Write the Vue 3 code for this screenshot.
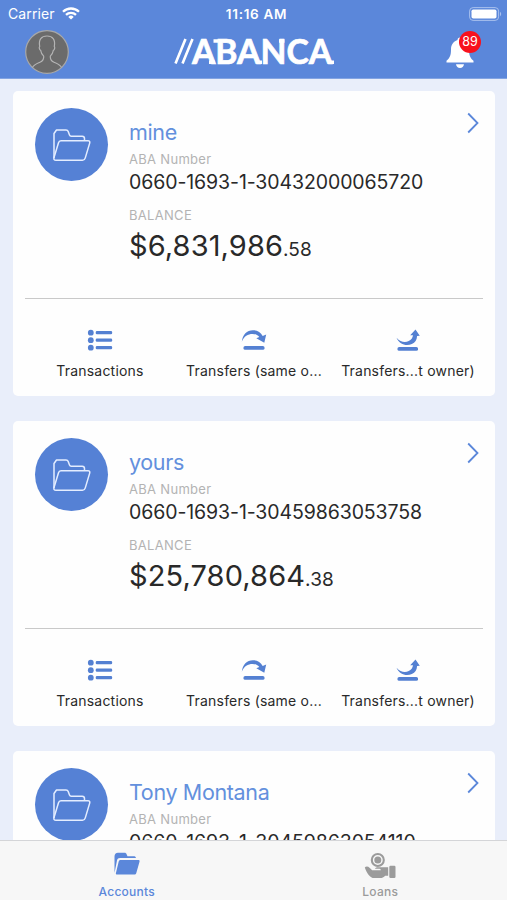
<script setup>
import { ref } from 'vue';

const activeTab = ref('accounts');
const notifications = ref(89);

const accounts = ref([
    { name: 'mine', number: '0660-1693-1-30432000065720', whole: '$6,831,986', cents: '.58' },
    { name: 'yours', number: '0660-1693-1-30459863053758', whole: '$25,780,864', cents: '.38' },
    { name: 'Tony Montana', number: '0660-1693-1-30459863054110' },
]);
</script>

<template>
    <div class="app">
        <header class="header">
            <div class="status">
                <div class="status__carrier">
                    Carrier
                    <svg class="wifi" width="18" height="13" viewBox="0 0 18 13" fill="none" stroke="#fff" stroke-width="2.3">
                        <path d="M1 4.8C5.5.4 12.5.4 17 4.8" />
                        <path d="M4 7.9c2.8-2.7 7.2-2.7 10 0" />
                        <path d="M9 12.6 6.3 9.900a3.900 3.900 0 0 1 5.400 0z" fill="#fff" stroke="none" />
                    </svg>
                </div>
                <div class="status__time">11:16 AM</div>
                <svg class="battery" width="33" height="14" viewBox="0 0 33 14">
                    <rect x=".6" y=".6" width="29" height="12.8" rx="3.5" fill="none" stroke="#a9c1ee" stroke-width="1" />
                    <rect x="2.5" y="2.5" width="25" height="9" rx="1.8" fill="#fff" />
                    <path d="M31 4.8c1.6.8 1.6 3.6 0 4.4z" fill="#a9c1ee" />
                </svg>
            </div>
            <div class="navbar">
                <svg class="avatar" width="44" height="44" viewBox="0 0 44 44">
                    <circle cx="22" cy="22" r="21.3" fill="#6b6b6b" stroke="#a8a8a8" stroke-width="1.2" />
                    <path d="M7.5 37.5c1.200-3 4-3.800 7.500-5.300 3-1.300 4-2.700 3.700-6-1.800-1.800-2.700-3.400-3-5.700-1.500-.8-1.800-3.200-1-4.200C13.400 9.500 16.500 6 22 6s8.600 3.500 7.300 10.300c.8 1 .5 3.400-1 4.200-.3 2.300-1.200 3.900-3 5.700-.3 3.300.7 4.700 3.700 6 3.500 1.500 6.300 2.300 7.500 5.300" fill="none" stroke="#b4b4b4" stroke-width="1.2" />
                </svg>
                <svg class="logo" width="162" height="34" viewBox="0 0 162 34">
                    <path d="M2.500 28.500 12.500 4M9.500 28.500 19.500 4" fill="none" stroke="#fff" stroke-width="2.600" />
                    <text x="19" y="29" textLength="140" lengthAdjust="spacingAndGlyphs">ABANCA</text>
                    <path d="M40.500 6h5M36 27.300h6M84 27.300h5M106 6h5.500M155 27.300h6" fill="none" stroke="#fff" stroke-width="3.400" />
                </svg>
                <div class="bell">
                    <svg width="28" height="33" viewBox="0 0 28 33" fill="#fff">
                        <path d="M14 1.500c-1.600 0-2.500 1-2.500 2.500C7 5.500 5 9 5 13.500c0 6-1.200 8.500-4.500 11.300V26.500h27v-1.700C24.200 22 23 19.500 23 13.500 23 9 21 5.500 16.500 4c0-1.500-.9-2.500-2.500-2.500z" />
                        <path d="M10 28.300h8c-.3 2.300-1.800 3.700-4 3.700s-3.700-1.400-4-3.700z" />
                    </svg>
                    <span class="bell__badge">{{ notifications }}</span>
                </div>
            </div>
        </header>

        <main class="list">
            <article v-for="account in accounts" :key="account.number" class="card">
                <div class="card__top">
                    <div class="card__icon">
                        <svg width="40" height="34" viewBox="0 0 40 34" fill="none" stroke="#e4edff" stroke-width="1.5" stroke-linejoin="round">
                            <path d="M2 30V5.500L4.500 2H14c1.200 0 1.800.4 2.200 1.500L17.500 7c.3.800.8 1.200 1.700 1.200h11c1.500 0 2.300.8 2.300 2.300v2" />
                            <path d="M9 12.800h27c1.600 0 2.100.9 1.700 2.300l-4.500 15c-.5 1.600-1.200 2.200-2.700 2.200H4c-1.800 0-2.500-1-2-2.700L6.500 14.800c.4-1.400 1.200-2 2.500-2z" />
                        </svg>
                    </div>
                    <div class="card__info">
                        <div class="card__name">{{ account.name }}</div>
                        <div class="card__label">ABA Number</div>
                        <div class="card__number">{{ account.number }}</div>
                        <template v-if="account.whole">
                            <div class="card__label card__label--balance">BALANCE</div>
                            <div class="card__amount">{{ account.whole }}<span class="card__cents">{{ account.cents }}</span></div>
                        </template>
                    </div>
                    <svg class="card__chevron" width="12" height="22" viewBox="0 0 12 22" fill="none" stroke="#5b87da" stroke-width="1.8">
                        <path d="M1.200 1.500 10.500 11 1.200 20.500" />
                    </svg>
                </div>
                <div v-if="account.whole" class="card__actions">
                    <div class="action">
                        <svg width="26" height="24" viewBox="0 0 26 24" fill="#5480d2">
                            <circle cx="3.800" cy="4.700" r="2.900" />
                            <circle cx="3.800" cy="12.200" r="2.900" />
                            <circle cx="3.800" cy="19.700" r="2.900" />
                            <rect x="8.700" y="3.100" width="16.500" height="3.200" rx="1.300" />
                            <rect x="8.700" y="10.600" width="16.500" height="3.200" rx="1.300" />
                            <rect x="8.700" y="18.100" width="16.500" height="3.200" rx="1.300" />
                        </svg>
                        <span class="action__label">Transactions</span>
                    </div>
                    <div class="action">
                        <svg width="26" height="24" viewBox="0 0 26 24" fill="#5480d2">
                            <path d="M.8 13.800C1.500 6.500 6 2.200 11.800 2.200c4.500 0 7.900 2 9.900 5.700l3.500-1.300-1.900 8.200-8-4.600 3-1.100C16.600 7 14.500 6 11.500 6 7 6 3 8.200.8 13.800z" />
                            <rect x="2.500" y="18" width="21" height="3.800" rx="1.600" />
                        </svg>
                        <span class="action__label">Transfers (same o...</span>
                    </div>
                    <div class="action">
                        <svg width="26" height="24" viewBox="0 0 26 24" fill="#5480d2">
                            <path d="M1.500 9.700c4 4.400 8.500 5 12.200 3.300 2.500-1.200 4-3 4.300-5.700h-2.800L20.500 1.600l4.300 6.200-2.700.1c-.2 4-2 6.700-5.200 8.100C11 18.500 4.500 16.300 1.500 9.700z" />
                            <rect x="2.500" y="18.900" width="20.500" height="3.900" rx="1.600" />
                        </svg>
                        <span class="action__label">Transfers...t owner)</span>
                    </div>
                </div>
            </article>
        </main>

        <nav class="tabs">
            <div class="tab" :class="activeTab === 'accounts' ? 'tab--active' : ''" @click="activeTab = 'accounts'">
                <svg width="32" height="28" viewBox="0 0 32 28" fill="currentColor">
                    <path d="M3.500 22V5.500C3.500 3 4.800 1.700 7 1.700h6.500c1.200 0 1.700.5 2.100 1.500l.9 2h6c1.700 0 2.400.6 2.400 1.800H9c-1.700 0-2.500.7-2.900 2z" />
                    <path d="M9.500 9h17.800c1.200 0 1.500.7 1.200 1.700l-3.200 11.200c-.4 1.200-.9 1.700-2.100 1.700H6.200c-1.300 0-1.600-.7-1.200-1.800l2.700-11.200c.3-1.100.8-1.600 1.800-1.600z" />
                </svg>
                <span class="tab__label">Accounts</span>
            </div>
            <div class="tab" :class="activeTab === 'loans' ? 'tab--active' : ''" @click="activeTab = 'loans'">
                <svg width="32" height="28" viewBox="0 0 32 28" fill="currentColor">
                    <circle cx="13.800" cy="9" r="6" fill="none" stroke="currentColor" stroke-width="2.100" />
                    <circle cx="13.800" cy="9" r="3.500" />
                    <path d="M.8 16.500c1.200-1.500 3.400-1.200 4.700.2l2.700 2.600h8.600c0-1.100-.8-1.500-2-1.500h-4c.5-1.100 1.500-1.600 3-1.600h10.400v8.500h-3c-1.500 1.700-3 2.400-5 2.400h-6C6 27.100 3 22.500.8 16.500z" />
                    <rect x="25.300" y="14.800" width="6.200" height="12.200" rx="1.200" />
                </svg>
                <span class="tab__label">Loans</span>
            </div>
        </nav>
    </div>
</template>

<style>
body {
    margin: 0;
    overflow: hidden;
}
</style>

<style scoped>
.app {
    display: flex;
    flex-direction: column;
    width: 507px;
    height: 900px;
    overflow: hidden;
    background: #e9eefa;
    font-family: Inter, "Liberation Sans", sans-serif;
    color: #292929;
}

.header {
    flex: none;
    height: 79px;
    background: #5b87da;
    color: #fff;
    box-sizing: border-box;
    border-bottom: 1px solid #83a4e2;
}

.status {
    display: grid;
    grid-template-columns: 1fr auto 1fr;
    align-items: center;
    height: 27px;
    padding: 0 5px 0 8px;
    font-size: 14px;
}

.status__carrier {
    display: flex;
    align-items: center;
    gap: 7px;
    letter-spacing: 0.1px;
}

.status__time {
    font-weight: 600;
    font-size: 13.5px;
    letter-spacing: 0.7px;
    padding-left: 3px;
}

.battery {
    justify-self: end;
}

.navbar {
    display: flex;
    justify-content: space-between;
    align-items: center;
    height: 50px;
    padding: 0 25px;
}

.logo {
    overflow: visible;
    margin-right: 7px;
}

.logo text {
    font-family: Lato, sans-serif;
    font-weight: 700;
    font-size: 35px;
    fill: #fff;
    stroke: #fff;
    stroke-width: 0.7px;
}

.bell {
    position: relative;
    width: 36px;
    height: 33px;
}

.bell__badge {
    position: absolute;
    left: 13px;
    top: -5px;
    width: 22px;
    height: 22px;
    border-radius: 50%;
    background: #f8111d;
    font-size: 12.5px;
    line-height: 22px;
    text-align: center;
}

.list {
    flex: 1;
    min-height: 0;
    overflow: hidden;
    display: flex;
    flex-direction: column;
    gap: 25px;
    padding: 12px 12px 0 13px;
}

.card {
    flex: none;
    height: 305px;
    border-radius: 5px;
    background: #fefefe;
}

.card__top {
    display: flex;
    height: 207px;
    margin: 0 12px;
    border-bottom: 1px solid #c9c9c9;
}

.card__icon {
    display: flex;
    justify-content: center;
    align-items: center;
    width: 73px;
    height: 73px;
    margin: 17px 0 0 10px;
    border-radius: 50%;
    background: #5581d5;
}

.card__info {
    flex: 1;
    margin: 28px 0 0 21px;
    white-space: nowrap;
}

.card__name {
    font-size: 21.5px;
    line-height: 26px;
    letter-spacing: -0.35px;
    color: #6390dd;
}

.card__label {
    margin-top: 6px;
    font-size: 13px;
    line-height: 16px;
    color: #b3b3b3;
    letter-spacing: 0.3px;
}

.card__label--balance {
    margin-top: 14px;
}

.card__number {
    margin-top: 4px;
    font-size: 19.5px;
    line-height: 22px;
    letter-spacing: -0.1px;
}

.card__amount {
    margin-top: 6px;
    font-size: 29px;
    line-height: 34px;
    letter-spacing: 0.1px;
}

.card__cents {
    font-size: 19px;
}

.card__chevron {
    margin-top: 21px;
    margin-right: 4px;
}

.card__actions {
    display: grid;
    grid-template-columns: repeat(3, 154px);
    justify-content: center;
    padding-top: 29px;
}

.action {
    display: flex;
    flex-direction: column;
    align-items: center;
    gap: 9px;
    white-space: nowrap;
}

.action__label {
    font-size: 14px;
    line-height: 20px;
    letter-spacing: 0.2px;
}

.tabs {
    flex: none;
    display: flex;
    height: 60px;
    box-sizing: border-box;
    border-top: 1px solid #d4d5d8;
    background: #f7f7f7;
    color: #9b9b9b;
}

.tab {
    flex: 1;
    display: flex;
    flex-direction: column;
    align-items: center;
    padding-top: 10px;
}

.tab--active {
    color: #5b87da;
}

.tab__label {
    margin-top: 5px;
    font-size: 12px;
    line-height: 16px;
    font-weight: 500;
    letter-spacing: 0.25px;
}
</style>
